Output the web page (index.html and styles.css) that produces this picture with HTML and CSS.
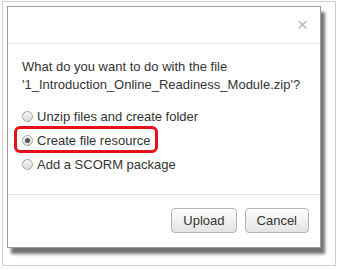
FILE: index.html
```html
<!DOCTYPE html>
<html lang="en">
<head>
  <meta charset="UTF-8" />
  <title>Upload file</title>
  <link rel="stylesheet" href="styles.css">
</head>
<body>
  <div class="frame">
    <div class="dialog">
      <div class="dialog-header">
        <span class="close">&times;</span>
      </div>
      <div class="dialog-body">
        <p class="question">What do you want to do with the file<br>'1_Introduction_Online_Readiness_Module.zip'?</p>
        <label class="option">
          <input type="radio" name="action">
          <span>Unzip files and create folder</span>
        </label>
        <label class="option highlighted">
          <input type="radio" name="action" checked>
          <span>Create file resource</span>
          <span class="callout"></span>
        </label>
        <label class="option">
          <input type="radio" name="action">
          <span>Add a SCORM package</span>
        </label>
      </div>
      <div class="dialog-footer">
        <button>Upload</button>
        <button>Cancel</button>
      </div>
    </div>
  </div>
</body>
</html>
```
FILE: styles.css
```css
* {
  box-sizing: border-box;
  font-family: 'Liberation Sans', Arial, sans-serif;
}
body {
  margin: 0;
  background: #fff;
  width: 340px;
  height: 270px;
  overflow: hidden;
}
.frame {
  margin: 1px 4px 0 2px;
  height: 265px;
  border: 1px solid #d0d0d0;
  padding: 4px 0 0 4px;
}
.dialog {
  width: 314px;
  height: 242px;
  background: #fff;
  border: 1px solid #9a9a9a;
  box-shadow: 4px 6px 3px rgba(0, 0, 0, 0.55);
  display: flex;
  flex-direction: column;
}
.dialog-header {
  height: 37px;
  border-bottom: 1px solid #e8e8e8;
  display: flex;
  justify-content: flex-end;
  align-items: center;
  padding: 0 12px 2px 0;
}
.close {
  font-size: 19px;
  color: #b8b8b8;
  line-height: 1;
}
.dialog-body {
  flex: 1;
  padding: 14px 14px 0 14px;
  color: #333;
  font-size: 13px;
}
.question {
  margin: 0 0 10px 0;
  line-height: 18px;
}
.option {
  position: relative;
  display: flex;
  align-items: center;
  height: 24px;
  gap: 4px;
}
.option input {
  appearance: none;
  margin: 0;
  width: 11px;
  height: 11px;
  border-radius: 50%;
  border: 1px solid #a8a8a8;
  background: linear-gradient(#f4f4f4, #dcdcdc);
  display: grid;
  place-items: center;
}
.option input:checked::after {
  content: '';
  width: 5px;
  height: 5px;
  border-radius: 50%;
  background: #555;
}
.callout {
  position: absolute;
  left: -8px;
  top: -2px;
  width: 144px;
  height: 27px;
  border: 3px solid #e5121a;
  border-radius: 6px;
}
.dialog-footer {
  height: 53px;
  border-top: 1px solid #e8e8e8;
  display: flex;
  justify-content: flex-end;
  align-items: flex-start;
  gap: 8px;
  padding: 13px 11px 0 0;
}
button {
  height: 25px;
  padding: 0 11px;
  font-size: 13px;
  color: #333;
  background: linear-gradient(#fdfdfd, #e4e4e4);
  border: 1px solid #b4b4b4;
  border-radius: 4px;
}
```
